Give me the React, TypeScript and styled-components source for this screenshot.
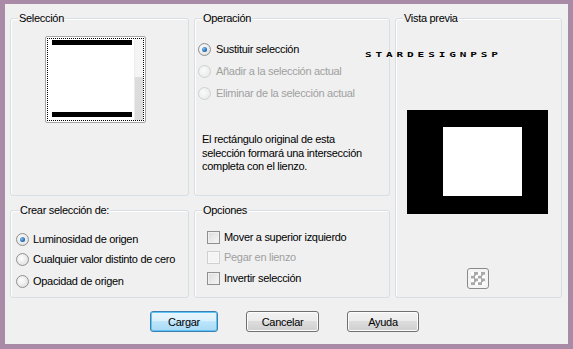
import React from "react";
import styled, { createGlobalStyle } from "styled-components";

const Global = createGlobalStyle`
  html, body { margin: 0; padding: 0; background: #a98aa7; }
  body { font-family: "Liberation Sans", Arial, sans-serif; font-size: 11px; letter-spacing: -0.3px; color: #000; }
`;

const Frame = styled.div`
  width: 573px;
  height: 349px;
  padding: 4px 5px 0 5px;
  box-sizing: border-box;
`;

const Dialog = styled.div`
  position: relative;
  width: 563px;
  height: 340px;
  background: #f0f0f0;
  box-sizing: border-box;
  padding: 14px 6px 0 5px;
  display: flex;
  flex-direction: column;
`;

const Grid = styled.div`
  display: grid;
  grid-template-columns: 179px 196px 167px;
  grid-template-rows: 178px 88px;
  column-gap: 5px;
  row-gap: 14px;
`;

const Group = styled.div<{ $col: number; $row: string }>`
  position: relative;
  border: 1px solid #d5dfe5;
  border-radius: 3px;
  box-shadow: inset 1px 1px 0 #fff;
  box-sizing: border-box;
  grid-column: ${(p) => p.$col};
  grid-row: ${(p) => p.$row};
  display: flex;
  flex-direction: column;
`;

const Legend = styled.span<{ $left: number }>`
  position: absolute;
  top: -7px;
  left: ${(p) => p.$left}px;
  background: #f0f0f0;
  padding: 0 1px;
  line-height: 13px;
`;

const Thumb = styled.div`
  margin: 17px 0 0 34px;
  width: 101px;
  height: 87px;
  border: 1px solid #a5a5a5;
  border-radius: 2px;
  box-sizing: border-box;
  background: #fff;
  padding: 1px;
`;

const ThumbInner = styled.div`
  height: 100%;
  border: 1px dotted #000;
  box-sizing: border-box;
  display: flex;
`;

const ThumbCanvas = styled.div`
  flex: 1;
  display: flex;
  flex-direction: column;
  justify-content: space-between;
  padding: 1px 0 3px 4px;
`;

const Bar = styled.div`
  width: 80px;
  height: 5px;
  background: #000;
`;

const ScrollTrack = styled.div`
  width: 8px;
  background: linear-gradient(#f4f4f4 0 38px, #dcdcdc 38px 100%);
  border-left: 1px solid #ececec;
`;

const Options = styled.div<{ $top: number; $left: number; $gap: number }>`
  display: flex;
  flex-direction: column;
  gap: ${(p) => p.$gap}px;
  padding: ${(p) => p.$top}px 0 0 ${(p) => p.$left}px;
`;

const OptionRow = styled.div<{ $disabled?: boolean; $textGap: number; $shift?: number }>`
  display: flex;
  align-items: center;
  gap: ${(p) => p.$textGap}px;
  height: 14px;
  margin-top: ${(p) => p.$shift ?? 0}px;
  color: ${(p) => (p.$disabled ? "#a0a0a0" : "#000")};
  white-space: nowrap;
`;

const Radio = styled.span<{ $checked?: boolean; $disabled?: boolean }>`
  width: 11px;
  height: 11px;
  border-radius: 50%;
  border: 1px solid ${(p) => (p.$disabled ? "#cfd0d0" : "#8f9090")};
  background: ${(p) =>
    p.$disabled
      ? "radial-gradient(circle at 40% 40%, #fafafa, #e6e6e6)"
      : "radial-gradient(circle at 40% 40%, #ffffff, #d8d8d8)"};
  display: flex;
  align-items: center;
  justify-content: center;
  flex: none;
  &::after {
    content: "";
    display: ${(p) => (p.$checked ? "block" : "none")};
    width: 5px;
    height: 5px;
    border-radius: 50%;
    background: radial-gradient(circle at 35% 35%, #7cc3f5, #1c5fa8 70%, #0e3f80);
  }
`;

const Check = styled.span<{ $disabled?: boolean }>`
  width: 11px;
  height: 11px;
  border: 1px solid ${(p) => (p.$disabled ? "#cfd0d0" : "#8f8f8f")};
  background: ${(p) =>
    p.$disabled ? "#f4f4f4" : "linear-gradient(135deg, #dcdcdc, #f6f6f6)"};
  box-shadow: inset 0 0 0 1px ${(p) => (p.$disabled ? "#f8f8f8" : "#f0f0f0")};
  flex: none;
`;

const Note = styled.p`
  margin: 33px 0 0 7px;
  line-height: 13.5px;
  white-space: nowrap;
`;

const Watermark = styled.div`
  position: absolute;
  left: 360px;
  top: 45px;
  font-family: "DejaVu Sans Mono", monospace;
  font-size: 11px;
  font-weight: bold;
  letter-spacing: 3.9px;
  transform: scaleY(0.55);
  color: #000;
`;

const Preview = styled.div`
  margin: 91px 0 0 11px;
  width: 141px;
  height: 104px;
  background: #000;
  padding: 17px 0 0 36px;
  box-sizing: border-box;
`;

const PreviewWhite = styled.div`
  width: 79px;
  height: 69px;
  background: #fff;
`;

const CheckerBtn = styled.div`
  margin: 54px 0 0 71px;
  width: 22px;
  height: 21px;
  border: 1px solid #8a8a8a;
  border-radius: 3px;
  box-sizing: border-box;
  padding: 3px;
  background: #f4f4f4;
`;

const Checker = styled.div`
  width: 14px;
  height: 13px;
  background-color: #fff;
  background-image: conic-gradient(#a9a9a9 25%, #fff 0 50%, #a9a9a9 0 75%, #fff 0);
  background-size: 7px 6.5px;
`;

const Buttons = styled.div`
  display: flex;
  gap: 28px;
  padding: 13px 0 0 140px;
`;

const Button = styled.button<{ $primary?: boolean; $w: number }>`
  width: ${(p) => p.$w}px;
  height: 21px;
  border-radius: 3px;
  font-family: "Liberation Sans", Arial, sans-serif;
  font-size: 11px;
  letter-spacing: -0.3px;
  color: #000;
  padding: 0;
  border: 1px solid ${(p) => (p.$primary ? "#3c7fb1" : "#707070")};
  background: ${(p) =>
    p.$primary
      ? "linear-gradient(#eaf6fd 0%, #d9f0fc 50%, #bee6fd 50%, #a7d9f5 100%)"
      : "linear-gradient(#f2f2f2 0%, #ebebeb 50%, #dddddd 50%, #cfcfcf 100%)"};
  box-shadow: inset 0 0 0 1px ${(p) => (p.$primary ? "#5fc3f5" : "#fcfcfc")};
`;

export default function App() {
  return (
    <Frame>
      <Global />
      <Dialog>
        <Grid>
          <Group $col={1} $row="1">
            <Legend $left={7}>Selección</Legend>
            <Thumb>
              <ThumbInner>
                <ThumbCanvas>
                  <Bar />
                  <Bar />
                </ThumbCanvas>
                <ScrollTrack />
              </ThumbInner>
            </Thumb>
          </Group>

          <Group $col={2} $row="1">
            <Legend $left={7}>Operación</Legend>
            <Options $top={23} $left={3} $gap={8}>
              <OptionRow $textGap={5}>
                <Radio $checked />
                Sustituir selección
              </OptionRow>
              <OptionRow $textGap={5} $disabled>
                <Radio $disabled />
                Añadir a la selección actual
              </OptionRow>
              <OptionRow $textGap={5} $disabled>
                <Radio $disabled />
                Eliminar de la selección actual
              </OptionRow>
            </Options>
            <Note>
              El rectángulo original de esta
              <br />
              selección formará una intersección
              <br />
              completa con el lienzo.
            </Note>
          </Group>

          <Group $col={3} $row="1 / span 2">
            <Legend $left={7}>Vista previa</Legend>
            <Preview>
              <PreviewWhite />
            </Preview>
            <CheckerBtn>
              <Checker />
            </CheckerBtn>
          </Group>

          <Group $col={1} $row="2">
            <Legend $left={8}>Crear selección de:</Legend>
            <Options $top={21} $left={5} $gap={6}>
              <OptionRow $textGap={4}>
                <Radio $checked />
                Luminosidad de origen
              </OptionRow>
              <OptionRow $textGap={4}>
                <Radio />
                Cualquier valor distinto de cero
              </OptionRow>
              <OptionRow $textGap={4} $shift={2}>
                <Radio />
                Opacidad de origen
              </OptionRow>
            </Options>
          </Group>

          <Group $col={2} $row="2">
            <Legend $left={7}>Opciones</Legend>
            <Options $top={19} $left={12} $gap={6}>
              <OptionRow $textGap={4}>
                <Check />
                Mover a superior izquierdo
              </OptionRow>
              <OptionRow $textGap={4} $disabled>
                <Check $disabled />
                Pegar en lienzo
              </OptionRow>
              <OptionRow $textGap={4} $shift={1}>
                <Check />
                Invertir selección
              </OptionRow>
            </Options>
          </Group>
        </Grid>
        <Buttons>
          <Button $primary $w={68}>Cargar</Button>
          <Button $w={73}>Cancelar</Button>
          <Button $w={72}>Ayuda</Button>
        </Buttons>
        <Watermark>STARDESIGNPSP</Watermark>
      </Dialog>
    </Frame>
  );
}
